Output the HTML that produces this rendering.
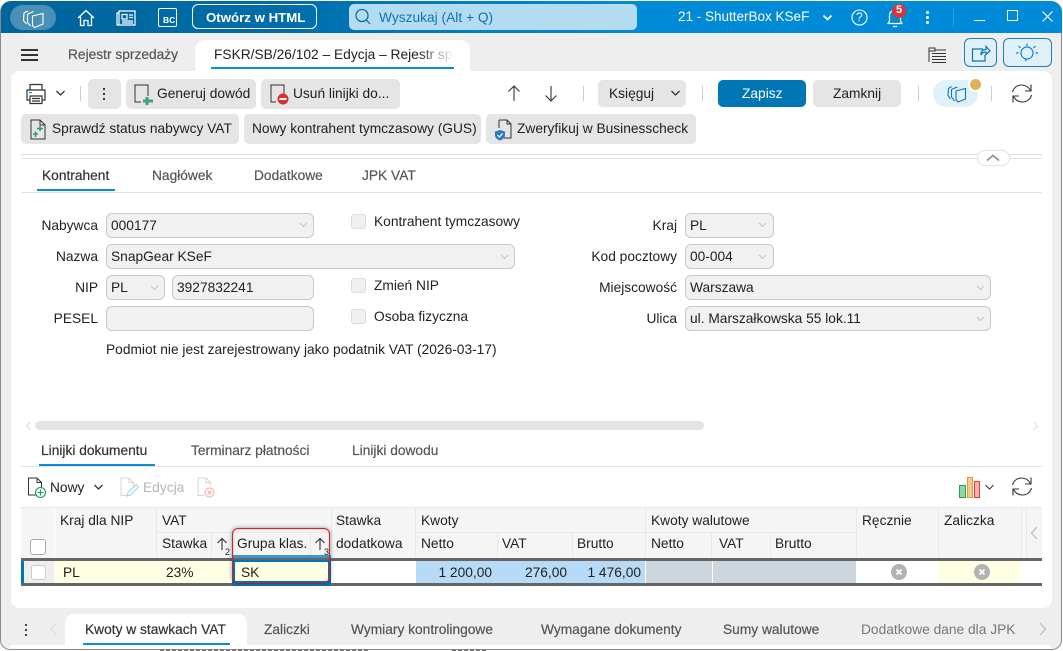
<!DOCTYPE html>
<html lang="pl"><head><meta charset="utf-8"><title>FSKR/SB/26/102</title>
<style>
html,body{margin:0;padding:0;background:#fff}
body{width:1063px;height:651px;position:relative;overflow:hidden;font-family:"Liberation Sans",sans-serif;font-size:13.75px;color:#212121}
.a,.t,.b,.f{position:absolute}
.t{white-space:nowrap;line-height:16px}
.b{background:#e5e5e5;border-radius:5px}
.f{background:#f1f1f1;border:1px solid #c8c8c8;border-radius:6px;box-sizing:border-box;height:25px}
.r{text-align:right}
.g{color:#555}
.m{-webkit-text-stroke:.2px currentColor}
.cb{position:absolute;width:13px;height:13px;background:#f0f0f0;border:1px solid #ddd;border-radius:3px}
svg{position:absolute;overflow:visible}
</style></head><body>
<div class="a" style="left:160px;top:650px;width:210px;height:1px;background:repeating-linear-gradient(90deg,#666 0 4px,transparent 4px 6px)"></div>
<div class="a" style="left:452px;top:650px;width:36px;height:1px;background:repeating-linear-gradient(90deg,#666 0 4px,transparent 4px 6px)"></div>
<div class="a" style="left:0;top:1px;width:1062px;height:649px;background:#eee;border-radius:11px 11px 10px 10px;border:1px solid #8a8a8a;box-sizing:border-box;border-top:0"></div>
<div class="a" style="left:1px;top:1px;width:1061px;height:32px;background:linear-gradient(90deg,#00659a 0,#006ca8 25%,#007fc4 45%,#008bd8 60%,#008bd8 100%);border-radius:10px 11px 0 0"></div>
<div class="a" style="left:11px;top:71px;width:1041px;height:537px;background:#fff;border-radius:9px"></div>

<!-- title bar -->
<div class="a" style="left:10px;top:5px;width:46px;height:25px;background:#4a8fb6;border-radius:13px"></div>
<svg style="left:22px;top:8px" width="22" height="21" fill="none" stroke="#fff" stroke-width="1.100"><path d="M10.500 8L21 5.500V16L12.500 19.500 10.500 17.500zM7 5.500L11.500 3.500M7 5.500L5.500 6.500V14.500L8.500 18M6 3L2 5 1.500 12.500 4.500 16"/></svg>
<svg style="left:77px;top:9px" width="18" height="18" fill="none" stroke="#fff" stroke-width="1.300"><path d="M1 9L9 1.500 17 9M3.500 7.500V16.500H7V11.500H11V16.500H14.500V7.500"/></svg>
<svg style="left:116px;top:10px" width="20" height="16" fill="none" stroke="#fff" stroke-width="1.200"><path d="M3 1H19V15H3zM3 3H1V15H3M6 4.500H11V9H6zM13 5H17M13 7.500H17M6 11H17M6 13H17"/></svg>
<div class="a" style="left:158px;top:8px;width:19px;height:19px;border:1.300px solid #fff;border-radius:2px;box-sizing:border-box"></div>
<div class="t" style="left:163px;top:15px;font-size:8.500px;font-weight:bold;color:#fff;line-height:10px">BC</div>
<div class="a" style="left:192px;top:4px;height:25px;border:1px solid #fff;border-radius:6px;box-sizing:border-box;width:125px"></div>
<div class="t" style="left:206px;top:10px;color:#fff;font-weight:bold;font-size:13.250px">Otwórz w HTML</div>
<div class="a" style="left:349px;top:4px;width:288px;height:26px;background:#b3dcf3;border-radius:5px"></div>
<svg style="left:354px;top:8px" width="18" height="18" fill="none" stroke="#0a6fa8" stroke-width="1.300"><circle cx="8" cy="7.500" r="6"/><path d="M12.500 12L16 16"/></svg>
<div class="t" style="left:379px;top:10px;color:#0e76b0">Wyszukaj (Alt + Q)</div>
<div class="t" style="left:678px;top:9px;color:#fff;font-size:13.500px">21 - ShutterBox KSeF</div>
<svg style="left:822px;top:14px" width="11" height="8" fill="none" stroke="#fff" stroke-width="1.800"><path d="M1.500 1.500L5.500 5.500 9.500 1.500"/></svg>
<svg style="left:851px;top:9px" width="17" height="17" fill="none" stroke="#fff" stroke-width="1.100"><circle cx="8.500" cy="8.500" r="7.500"/></svg>
<div class="t" style="left:856px;top:9px;color:#fff;font-size:12px">?</div>
<svg style="left:887px;top:8px" width="16" height="20" fill="none" stroke="#fff" stroke-width="1.200"><path d="M1 15.500H15L13.500 13V7C13.500 4 11 2.500 8 2.500S2.500 4 2.500 7V13zM6 18.500H10"/></svg>
<div class="a" style="left:892px;top:4px;width:14px;height:14px;background:#d8343a;border-radius:50%"></div>
<div class="t" style="left:896px;top:3px;color:#fff;font-weight:bold;font-size:11px;line-height:15px">5</div>
<div class="a" style="left:926px;top:11px;width:3px;height:3px;background:#fff;border-radius:50%"></div>
<div class="a" style="left:926px;top:16px;width:3px;height:3px;background:#fff;border-radius:50%"></div>
<div class="a" style="left:926px;top:21px;width:3px;height:3px;background:#fff;border-radius:50%"></div>
<div class="a" style="left:953px;top:8px;width:1px;height:19px;background:#2ea0e0"></div>
<div class="a" style="left:974px;top:20px;width:11px;height:1px;background:#fff"></div>
<div class="a" style="left:1007px;top:10px;width:9px;height:9px;border:1px solid #fff"></div>
<svg style="left:1042px;top:11px" width="11" height="11" stroke="#fff" stroke-width="1.100"><path d="M.5 .5L10.500 10.500M10.500 .5L.5 10.500"/></svg>

<!-- tab bar -->
<div class="a" style="left:21px;top:49px;width:17px;height:2px;background:#333"></div>
<div class="a" style="left:21px;top:54px;width:17px;height:2px;background:#333"></div>
<div class="a" style="left:21px;top:59px;width:17px;height:2px;background:#333"></div>
<div class="t g m" style="left:68px;top:47px">Rejestr sprzedaży</div>
<div class="a" style="left:195px;top:40px;width:275px;height:31px;background:#fff;border-radius:10px 10px 0 0"></div>
<div class="t" style="left:214px;top:47px;width:240px;overflow:hidden;-webkit-mask-image:linear-gradient(90deg,#000 85%,transparent 100%)">FSKR/SB/26/102 – Edycja – Rejestr sprzedaży</div>
<div class="a" style="left:211px;top:67px;width:243px;height:2px;background:#0a8fd6"></div>
<svg style="left:927px;top:47px" width="20" height="17" fill="none" stroke="#333" stroke-width="1"><path d="M2 0.500V15M2 1H8V4H2zM8 3H19M5 6.500H19M5 9.500H19M5 12.500H19M5 15.500H19"/></svg>
<div class="a" style="left:964px;top:38px;width:33px;height:29px;background:#dff0fa;border:1px solid #1a80b6;border-radius:6px;box-sizing:border-box"></div>
<svg style="left:971px;top:45px" width="20" height="17" fill="none" stroke="#0d73aa" stroke-width="1.200"><path d="M12 4H1.500V16H14V10M10 10C10 6 12 4.500 15 4.500V1.500L19 6 15 9.500V7C12.500 7 11 8 10 10z"/></svg>
<div class="a" style="left:1003px;top:38px;width:49px;height:29px;background:#dff0fa;border:1px solid #1a80b6;border-radius:6px;box-sizing:border-box"></div>
<svg style="left:1015px;top:42px" width="24" height="22" fill="none" stroke="#0d86c6" stroke-width="1.200"><circle cx="12" cy="11" r="6"/><path d="M12 1.500V4M3.500 4L5.500 6M20.500 4L18.500 6M1 11H3.500M20.500 11H23M10 19L12 17"/></svg>

<!-- toolbar row 1 -->
<svg style="left:25px;top:83px" width="22" height="22" fill="none" stroke="#333" stroke-width="1.200"><path d="M5 7V1.500H17V7M5 17H2V7H20V17H17M5 13H17V20.500H5zM7 15.500H15M7 18H15"/><path d="M4 9.500H7" stroke="#1a8ad0"/></svg>
<svg style="left:55px;top:90px" width="11" height="7" fill="none" stroke="#333" stroke-width="1.300"><path d="M1.500 1L5.500 5 9.500 1"/></svg>
<div class="a" style="left:80px;top:86px;width:1px;height:15px;background:#ccc"></div>
<div class="b" style="left:88px;top:79px;width:33px;height:30px"></div>
<div class="a" style="left:103px;top:88px;width:2px;height:2px;background:#333"></div>
<div class="a" style="left:103px;top:93px;width:2px;height:2px;background:#333"></div>
<div class="a" style="left:103px;top:98px;width:2px;height:2px;background:#333"></div>
<div class="b" style="left:126px;top:79px;width:130px;height:30px"></div>
<svg style="left:134px;top:84px" width="20" height="22" fill="none" stroke="#333" stroke-width="1"><path d="M7 18H1V1H14V12"/><path d="M13 13V21M9 17H19" stroke="#3aa577" stroke-width="3"/></svg>
<div class="t" style="left:157px;top:86px">Generuj dowód</div>
<div class="b" style="left:261px;top:79px;width:139px;height:30px"></div>
<svg style="left:270px;top:84px" width="20" height="22" fill="none" stroke="#333" stroke-width="1"><path d="M6 18H1V1H14V10"/><circle cx="13" cy="15" r="5.500" fill="#d8322c" stroke="none"/><path d="M9.500 15H16.500" stroke="#fff" stroke-width="2"/></svg>
<div class="t" style="left:293px;top:86px">Usuń linijki do...</div>
<svg style="left:507px;top:85px" width="14" height="17" fill="none" stroke="#333" stroke-width="1.100"><path d="M7 16V1M1.500 6.500L7 1 12.500 6.500"/></svg>
<svg style="left:544px;top:85px" width="14" height="17" fill="none" stroke="#333" stroke-width="1.100"><path d="M7 1V16M1.500 10.500L7 16 12.500 10.500"/></svg>
<div class="a" style="left:583px;top:86px;width:1px;height:15px;background:#ccc"></div>
<div class="b" style="left:598px;top:80px;width:88px;height:27px"></div>
<div class="t" style="left:609px;top:86px">Księguj</div>
<svg style="left:670px;top:90px" width="11" height="7" fill="none" stroke="#333" stroke-width="1.300"><path d="M1.500 1L5.500 5 9.500 1"/></svg>
<div class="a" style="left:702px;top:86px;width:1px;height:15px;background:#ccc"></div>
<div class="a" style="left:718px;top:80px;width:88px;height:27px;background:#0076b4;border-radius:5px"></div>
<div class="t" style="left:742px;top:86px;color:#fff">Zapisz</div>
<div class="b" style="left:813px;top:80px;width:88px;height:27px"></div>
<div class="t" style="left:833px;top:86px">Zamknij</div>
<div class="a" style="left:918px;top:86px;width:1px;height:15px;background:#ccc"></div>
<div class="a" style="left:933px;top:80px;width:45px;height:27px;background:#e0f1fa;border-radius:13px"></div>
<svg style="left:947px;top:84px" width="20" height="20" fill="none" stroke="#0d78b4" stroke-width="1.100"><path d="M9 7L18.500 4.500V15L11 18 9 16zM6.500 4.500L10.500 3M6.500 4.500L4.500 5.500V13L7.500 17M4.500 2.500L1.500 4.500 1 11.500 3.500 15"/></svg>
<div class="a" style="left:968px;top:77px;width:15px;height:15px;background:#e0b05a;border:2px solid #fff;border-radius:50%;box-sizing:border-box"></div>
<div class="a" style="left:991px;top:86px;width:1px;height:15px;background:#ccc"></div>
<svg style="left:1011px;top:83px" width="22" height="21" fill="none" stroke="#333" stroke-width="1.100"><path d="M1.500 9C2.500 5 6 2 10.500 2C14.500 2 17.500 4 19.500 7.500M20 1.500V8H14M20.500 12C19.500 16 16 19 11.500 19C7.500 19 4.500 17 2.500 13.500M2 19.500V13H8"/></svg>

<!-- toolbar row 2 -->
<div class="b" style="left:21px;top:114px;width:218px;height:30px"></div>
<svg style="left:30px;top:119px" width="16" height="21" fill="none" stroke="#333" stroke-width="1"><path d="M1 1H10L15 6V20H1zM10 1V6H15"/><path d="M3 15H8M5.500 12.500V18M7 9.500H13M10 7V12" stroke="#2d9a6b" stroke-width="1.500"/></svg>
<div class="t" style="left:52px;top:121px">Sprawdź status nabywcy VAT</div>
<div class="b" style="left:244px;top:114px;width:237px;height:30px"></div>
<div class="t" style="left:252px;top:121px">Nowy kontrahent tymczasowy (GUS)</div>
<div class="b" style="left:486px;top:114px;width:210px;height:30px"></div>
<svg style="left:494px;top:119px" width="20" height="22" fill="none"><path d="M5 1H13L17 5V19H10M5 1V9M13 1V5H17" stroke="#333" stroke-width="1"/><path d="M6 11L11 12.500V16.500C11 19 8 21 6 21.500 4 21 1 19 1 16.500V12.500z" fill="#2f7bc4"/><path d="M3.500 16L5.500 18 8.500 14.500" stroke="#fff" stroke-width="1.200"/></svg>
<div class="t" style="left:517px;top:121px">Zweryfikuj w Businesscheck</div>

<!-- splitter -->
<div class="a" style="left:21px;top:154px;width:1021px;height:1px;background:#e0e0e0"></div>
<div class="a" style="left:21px;top:158px;width:1021px;height:1px;background:#e0e0e0"></div>
<div class="a" style="left:977px;top:150px;width:33px;height:16px;background:#fff;border:1px solid #e2e2e2;border-radius:8px;box-sizing:border-box"></div>
<svg style="left:986px;top:154px" width="14" height="8" fill="none" stroke="#8c8c8c" stroke-width="1.600"><path d="M1 6.500L7 1.500 13 6.500"/></svg>

<!-- upper tabs -->
<div class="t m" style="left:42px;top:168px;color:#333">Kontrahent</div>
<div class="t g m" style="left:152px;top:168px">Nagłówek</div>
<div class="t g m" style="left:254px;top:168px">Dodatkowe</div>
<div class="t g m" style="left:362px;top:168px">JPK VAT</div>
<div class="a" style="left:21px;top:192px;width:1021px;height:1px;background:#e2e2e2"></div>
<div class="a" style="left:37px;top:189px;width:78px;height:2px;background:#0a8fd6"></div>

<!-- form -->
<div class="t r" style="left:20px;top:218px;width:78px">Nabywca</div>
<div class="f" style="left:106px;top:213px;width:208px"></div>
<div class="t" style="left:111px;top:218px">000177</div>
<svg style="left:298px;top:222px" width="11" height="6" fill="none" stroke="#c4c4c4"><path d="M2 1L5.500 4.500 9 1"/></svg>
<div class="cb" style="left:351px;top:214px"></div>
<div class="t" style="left:374px;top:214px">Kontrahent tymczasowy</div>

<div class="t r" style="left:20px;top:249px;width:78px">Nazwa</div>
<div class="f" style="left:106px;top:244px;width:409px"></div>
<div class="t" style="left:111px;top:249px">SnapGear KSeF</div>
<svg style="left:499px;top:254px" width="11" height="6" fill="none" stroke="#c4c4c4"><path d="M2 1L5.500 4.500 9 1"/></svg>

<div class="t r" style="left:20px;top:280px;width:78px">NIP</div>
<div class="f" style="left:106px;top:275px;width:59px"></div>
<div class="t" style="left:111px;top:280px">PL</div>
<svg style="left:149px;top:285px" width="11" height="6" fill="none" stroke="#c4c4c4"><path d="M2 1L5.500 4.500 9 1"/></svg>
<div class="f" style="left:172px;top:275px;width:142px"></div>
<div class="t" style="left:177px;top:280px">3927832241</div>
<div class="cb" style="left:351px;top:278px"></div>
<div class="t" style="left:374px;top:278px">Zmień NIP</div>

<div class="t r" style="left:20px;top:311px;width:78px">PESEL</div>
<div class="f" style="left:106px;top:306px;width:208px"></div>
<div class="cb" style="left:351px;top:309px"></div>
<div class="t" style="left:374px;top:309px">Osoba fizyczna</div>
<div class="t" style="left:106px;top:342px">Podmiot nie jest zarejestrowany jako podatnik VAT (2026-03-17)</div>

<div class="t r" style="left:600px;top:218px;width:77px">Kraj</div>
<div class="f" style="left:685px;top:213px;width:89px"></div>
<div class="t" style="left:690px;top:218px">PL</div>
<svg style="left:757px;top:222px" width="11" height="6" fill="none" stroke="#c4c4c4"><path d="M2 1L5.500 4.500 9 1"/></svg>
<div class="t r" style="left:560px;top:249px;width:117px">Kod pocztowy</div>
<div class="f" style="left:685px;top:244px;width:89px"></div>
<div class="t" style="left:690px;top:249px">00-004</div>
<svg style="left:757px;top:254px" width="11" height="6" fill="none" stroke="#c4c4c4"><path d="M2 1L5.500 4.500 9 1"/></svg>
<div class="t r" style="left:560px;top:280px;width:117px">Miejscowość</div>
<div class="f" style="left:685px;top:275px;width:306px"></div>
<div class="t" style="left:690px;top:280px">Warszawa</div>
<svg style="left:975px;top:285px" width="11" height="6" fill="none" stroke="#c4c4c4"><path d="M2 1L5.500 4.500 9 1"/></svg>
<div class="t r" style="left:560px;top:311px;width:117px">Ulica</div>
<div class="f" style="left:685px;top:306px;width:306px"></div>
<div class="t" style="left:690px;top:311px">ul. Marszałkowska 55 lok.11</div>
<svg style="left:975px;top:316px" width="11" height="6" fill="none" stroke="#c4c4c4"><path d="M2 1L5.500 4.500 9 1"/></svg>

<!-- form scrollbar -->
<svg style="left:25px;top:421px" width="7" height="10" fill="none" stroke="#ddd" stroke-width="1.200"><path d="M5.500 1L1.500 5 5.500 9"/></svg>
<div class="a" style="left:35px;top:421px;width:669px;height:9px;background:#e4e4e4;border-radius:5px"></div>
<svg style="left:1032px;top:421px" width="7" height="10" fill="none" stroke="#e2e2e2" stroke-width="1.200"><path d="M1.500 1L5.500 5 1.500 9"/></svg>

<!-- lower tabs -->
<div class="t m" style="left:41px;top:443px;color:#333">Linijki dokumentu</div>
<div class="t g m" style="left:191px;top:443px">Terminarz płatności</div>
<div class="t g m" style="left:352px;top:443px">Linijki dowodu</div>
<div class="a" style="left:21px;top:466px;width:1021px;height:1px;background:#e2e2e2"></div>
<div class="a" style="left:39px;top:464px;width:116px;height:2px;background:#0a8fd6"></div>

<!-- grid toolbar -->
<svg style="left:27px;top:477px" width="21" height="22" fill="none"><path d="M9 18H1.500V1H10L14.500 5.500V10M10 1V5.500H14.500" stroke="#333"/><circle cx="13.500" cy="15.500" r="5" fill="#fff" stroke="#14a04c" stroke-width="1.100"/><path d="M13.500 12.500V18.500M10.500 15.500H16.500" stroke="#14a04c" stroke-width="1.100"/></svg>
<div class="t" style="left:50px;top:480px">Nowy</div>
<svg style="left:93px;top:484px" width="11" height="7" fill="none" stroke="#333" stroke-width="1.300"><path d="M1.500 1L5.500 5 9.500 1"/></svg>
<svg style="left:120px;top:477px" width="20" height="22" fill="none"><path d="M8 18.500H1V1H9L13.500 5.500V9M9 1V5.500H13.500" stroke="#d5d5d5"/><path d="M7 19L8 15.500 16 7.500 18.500 10 10.500 18z" stroke="#a8d4ef" stroke-width="1.200"/></svg>
<div class="t" style="left:143px;top:480px;color:#b5b5b5">Edycja</div>
<svg style="left:197px;top:477px" width="20" height="22" fill="none"><path d="M7 18.500H1V1H9L13.500 5.500V9M9 1V5.500H13.500" stroke="#d5d5d5"/><circle cx="12.500" cy="15.500" r="4.500" stroke="#f2a9a5"/><path d="M10.500 13.500L14.500 17.500M14.500 13.500L10.500 17.500" stroke="#f2a9a5"/></svg>
<div class="a" style="left:959px;top:485px;width:5px;height:11px;background:#8fd8a5;border:1px solid #22a550"></div>
<div class="a" style="left:967px;top:477px;width:4px;height:19px;background:#f7c98c;border:1px solid #e8973a"></div>
<div class="a" style="left:974px;top:481px;width:4px;height:15px;background:#f5b3b0;border:1px solid #e23f3a"></div>
<svg style="left:984px;top:484px" width="11" height="7" fill="none" stroke="#333" stroke-width="1"><path d="M1.500 1L5.500 5 9.500 1"/></svg>
<svg style="left:1011px;top:476px" width="22" height="21" fill="none" stroke="#333" stroke-width="1.100"><path d="M1.500 9C2.500 5 6 2 10.500 2C14.500 2 17.500 4 19.500 7.500M20 1.500V8H14M20.500 12C19.500 16 16 19 11.500 19C7.500 19 4.500 17 2.500 13.500M2 19.500V13H8"/></svg>

<!-- grid header -->
<div class="a" style="left:21px;top:507px;width:1021px;height:51px;background:#f5f5f5;border-top:1px solid #e8e8e8;box-sizing:border-box"></div>
<div class="a" style="left:54px;top:508px;width:1px;height:50px;background:#fff"></div>
<div class="a" style="left:156px;top:508px;width:1px;height:50px;background:#e8e8e8"></div>
<div class="a" style="left:331px;top:508px;width:1px;height:50px;background:#e8e8e8"></div>
<div class="a" style="left:415px;top:508px;width:1px;height:50px;background:#e8e8e8"></div>
<div class="a" style="left:645px;top:508px;width:1px;height:50px;background:#e8e8e8"></div>
<div class="a" style="left:856px;top:508px;width:1px;height:50px;background:#e8e8e8"></div>
<div class="a" style="left:938px;top:508px;width:1px;height:50px;background:#e8e8e8"></div>
<div class="a" style="left:1021px;top:508px;width:1px;height:50px;background:#e8e8e8"></div>
<div class="a" style="left:1026px;top:508px;width:1px;height:50px;background:#e8e8e8"></div>
<div class="a" style="left:156px;top:532px;width:175px;height:1px;background:#e8e8e8"></div>
<div class="a" style="left:415px;top:532px;width:441px;height:1px;background:#e8e8e8"></div>
<div class="a" style="left:211px;top:533px;width:1px;height:25px;background:#e8e8e8"></div>
<div class="a" style="left:310px;top:533px;width:1px;height:25px;background:#e8e8e8"></div>
<div class="a" style="left:497px;top:533px;width:1px;height:25px;background:#e8e8e8"></div>
<div class="a" style="left:572px;top:533px;width:1px;height:25px;background:#e8e8e8"></div>
<div class="a" style="left:711px;top:533px;width:1px;height:25px;background:#e8e8e8"></div>
<div class="a" style="left:770px;top:533px;width:1px;height:25px;background:#e8e8e8"></div>
<div class="a" style="left:30px;top:539px;width:14px;height:14px;background:#fff;border:1px solid #aaa;border-radius:3px"></div>
<div class="t" style="left:60px;top:513px">Kraj dla NIP</div>
<div class="t" style="left:162px;top:513px">VAT</div>
<div class="t" style="left:162px;top:536px">Stawka</div>
<div class="t" style="left:336px;top:513px">Stawka</div>
<div class="t" style="left:336px;top:536px">dodatkowa</div>
<div class="t" style="left:421px;top:513px">Kwoty</div>
<div class="t" style="left:421px;top:536px">Netto</div>
<div class="t" style="left:502px;top:536px">VAT</div>
<div class="t" style="left:577px;top:536px">Brutto</div>
<div class="t" style="left:651px;top:513px">Kwoty walutowe</div>
<div class="t" style="left:651px;top:536px">Netto</div>
<div class="t" style="left:719px;top:536px">VAT</div>
<div class="t" style="left:775px;top:536px">Brutto</div>
<div class="t" style="left:862px;top:513px">Ręcznie</div>
<div class="t" style="left:944px;top:513px">Zaliczka</div>
<svg style="left:216px;top:537px" width="12" height="14" fill="none" stroke="#333" stroke-width="1.100"><path d="M6 13V1.500M1.500 6L6 1.500 10.500 6"/></svg>
<div class="t" style="left:225px;top:547px;font-size:9px;line-height:10px">2</div>
<svg style="left:314px;top:537px" width="12" height="14" fill="none" stroke="#333" stroke-width="1.100"><path d="M6 13V1.500M1.500 6L6 1.500 10.500 6"/></svg>
<div class="t" style="left:324px;top:547px;font-size:9px;line-height:10px">3</div>
<svg style="left:1030px;top:526px" width="9" height="14" fill="none" stroke="#bbb" stroke-width="1.200"><path d="M7 1L1.500 7 7 13"/></svg>

<!-- grid row -->
<div class="a" style="left:21px;top:558px;width:1021px;height:3px;background:#666"></div>
<div class="a" style="left:21px;top:583px;width:1021px;height:3px;background:#666"></div>
<div class="a" style="left:21px;top:561px;width:3px;height:22px;background:#0076b4"></div>
<div class="a" style="left:24px;top:561px;width:30px;height:22px;background:#eee"></div>
<div class="a" style="left:31px;top:565px;width:13px;height:13px;background:#fff;border:1px solid #ccc;border-radius:3px"></div>
<div class="a" style="left:55px;top:561px;width:177px;height:22px;background:#ffffe3"></div>
<div class="t" style="left:63px;top:565px">PL</div>
<div class="t" style="left:166px;top:565px">23%</div>
<div class="a" style="left:232px;top:555px;width:99px;height:3px;background:#3b97cb"></div>
<div class="a" style="left:232px;top:558px;width:99px;height:28px;background:#0076b4"></div>
<div class="a" style="left:232px;top:558px;width:99px;height:2px;background:#666"></div>
<div class="a" style="left:235px;top:562px;width:93px;height:19px;background:#ffffe3"></div>
<div class="t" style="left:241px;top:565px">SK</div>
<div class="a" style="left:416px;top:561px;width:229px;height:22px;background:#b7dbf7"></div>
<div class="t r" style="left:416px;top:565px;width:76px">1 200,00</div>
<div class="t r" style="left:491px;top:565px;width:76px">276,00</div>
<div class="t r" style="left:565px;top:565px;width:76px">1 476,00</div>
<div class="a" style="left:646px;top:561px;width:210px;height:22px;background:#cdd6dd"></div>
<div class="a" style="left:712px;top:561px;width:1px;height:22px;background:#fff"></div>
<div class="a" style="left:938px;top:561px;width:83px;height:22px;background:#ffffe3"></div>
<svg style="left:891px;top:564px" width="16" height="16"><circle cx="8" cy="8" r="8" fill="#b3b3b3"/><path d="M5.500 5.500L10.500 10.500M10.500 5.500L5.500 10.500" stroke="#fff" stroke-width="1.800"/></svg>
<svg style="left:974px;top:564px" width="16" height="16"><circle cx="8" cy="8" r="8" fill="#b3b3b3"/><path d="M5.500 5.500L10.500 10.500M10.500 5.500L5.500 10.500" stroke="#fff" stroke-width="1.800"/></svg>

<!-- red highlight -->
<div class="a" style="left:232px;top:528px;width:98px;height:55px;border:1.500px solid #d91f26;border-radius:6px;box-sizing:border-box;box-shadow:0 0 4px rgba(0,0,0,.4),inset 0 0 2px rgba(0,0,0,.2)"></div>
<div class="t" style="left:237px;top:536px">Grupa klas.</div>

<!-- bottom tabs -->
<div class="a" style="left:25px;top:624px;width:2px;height:2px;background:#444"></div>
<div class="a" style="left:25px;top:629px;width:2px;height:2px;background:#444"></div>
<div class="a" style="left:25px;top:634px;width:2px;height:2px;background:#444"></div>
<svg style="left:50px;top:622px" width="8" height="14" fill="none" stroke="#ddd" stroke-width="1.200"><path d="M6.500 1L1 7 6.500 13"/></svg>
<div class="a" style="left:65px;top:614px;width:182px;height:31px;background:#fff;border-radius:9px 9px 0 0"></div>
<div class="t m" style="left:85px;top:622px;color:#333">Kwoty w stawkach VAT</div>
<div class="a" style="left:83px;top:643px;width:147px;height:2px;background:#0a8fd6"></div>
<div class="t g m" style="left:264px;top:622px">Zaliczki</div>
<div class="t g m" style="left:351px;top:622px">Wymiary kontrolingowe</div>
<div class="t g m" style="left:541px;top:622px">Wymagane dokumenty</div>
<div class="t g m" style="left:723px;top:622px">Sumy walutowe</div>
<div class="t" style="left:861px;top:622px;color:#777">Dodatkowe dane dla JPK</div>
<svg style="left:1039px;top:622px" width="8" height="14" fill="none" stroke="#bbb" stroke-width="1.200"><path d="M1 1L6.500 7 1 13"/></svg>
<div class="a" style="left:9px;top:645px;width:1043px;height:4px;background:#fff;border-radius:8px 8px 0 0"></div>
</body></html>
